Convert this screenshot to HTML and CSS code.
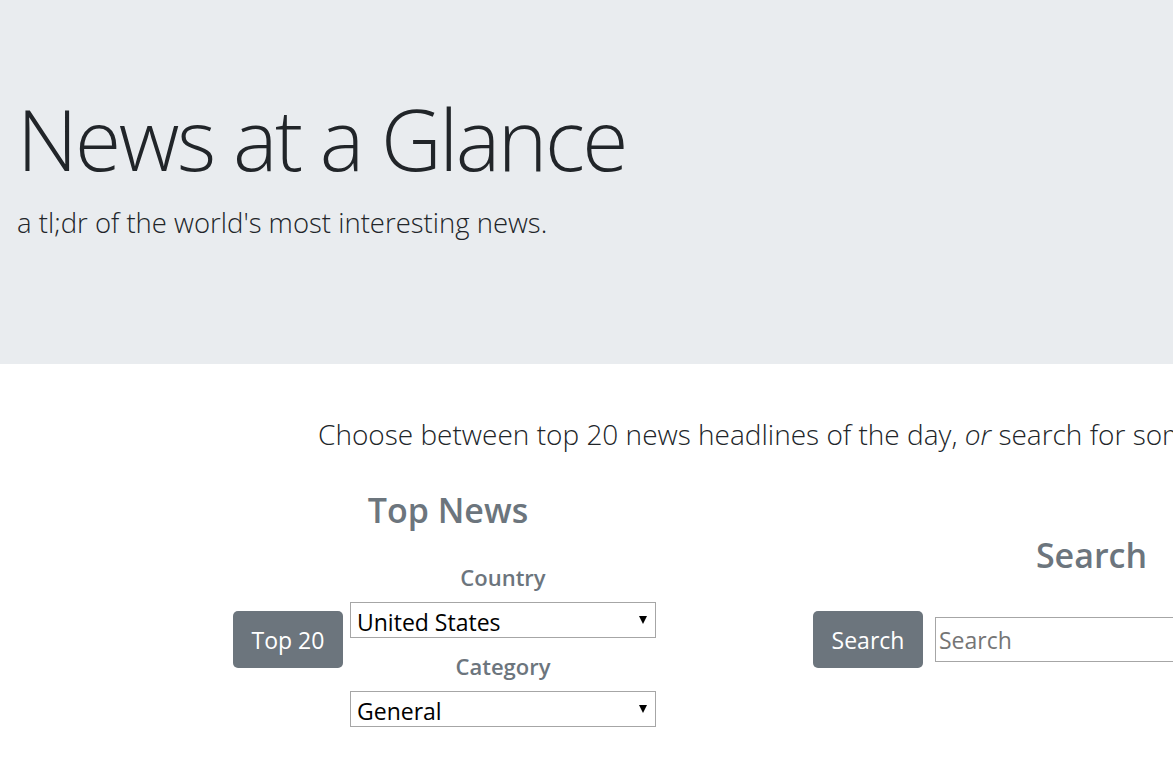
FILE: index.html
```html
<!DOCTYPE html>
<html lang="en">
<head>
<meta charset="utf-8">
<title>News at a Glance</title>
<link rel="stylesheet" href="styles.css">
</head>
<body>
<header class="jumbotron">
  <h1 class="title">News at a Glance</h1>
  <p class="lead">a tl;dr of the world's most interesting news.</p>
</header>
<main class="content">
  <p class="intro">Choose between top 20 news headlines of the day, <em>or</em> search for something specific.</p>
  <div class="panels">
    <section class="panel panel-top">
      <h2 class="panel-title">Top News</h2>
      <form class="panel-form">
        <button type="button" class="btn btn-top">Top 20</button>
        <div class="fields">
          <label class="field-label">Country</label>
          <div class="select-wrap">
            <select class="select"><option>United States</option></select>
          </div>
          <label class="field-label field-label-second">Category</label>
          <div class="select-wrap">
            <select class="select"><option>General</option></select>
          </div>
        </div>
      </form>
    </section>
    <section class="panel panel-search">
      <h2 class="panel-title">Search</h2>
      <form class="panel-form search-form">
        <button type="button" class="btn">Search</button>
        <input class="search-input" type="text" placeholder="Search">
      </form>
    </section>
  </div>
</main>
</body>
</html>
```

FILE: styles.css
```css
html, body {
  margin: 0;
  padding: 0;
  width: 1173px;
  height: 770px;
  overflow: hidden;
  background: #ffffff;
}

body {
  font-family: "Open Sans", "Noto Sans", sans-serif;
  color: #212529;
}

.jumbotron {
  background: #e9ecef;
  height: 364px;
  box-sizing: border-box;
  padding: 97px 0 0 17px;
}

.title {
  margin: 0;
  font-size: 84px;
  line-height: 1;
  font-weight: 300;
  letter-spacing: -2.5px;
  color: #212529;
  white-space: nowrap;
}

.lead {
  margin: 28px 0 0;
  font-size: 27.5px;
  line-height: 1;
  font-weight: 300;
  color: #212529;
  white-space: nowrap;
}

.content {
  padding-top: 56px;
}

.intro {
  margin: 0 0 44px;
  padding-left: 318px;
  font-size: 28px;
  line-height: 1;
  font-weight: 300;
  white-space: nowrap;
}

.intro em {
  font-style: italic;
}

.panels {
  display: flex;
  padding-left: 233px;
  width: 1500px;
}

.panel {
  display: flex;
  flex-direction: column;
}

.panel-top {
  width: 430px;
}

.panel-search {
  width: 557px;
  margin-left: 150px;
  padding-top: 46px;
}

.panel-title {
  margin: 0;
  text-align: center;
  font-size: 34px;
  line-height: 1;
  font-weight: 600;
  color: #6c757d;
}

.panel-top .panel-title {
  padding-top: 1px;
}

.panel-form {
  display: flex;
  align-items: flex-start;
  margin: 39px 0 0;
}

.btn {
  flex: none;
  width: 110px;
  height: 57px;
  border: none;
  border-radius: 5px;
  background: #6c757d;
  color: #ffffff;
  font-family: inherit;
  font-size: 23px;
  padding: 0;
}

.btn-top {
  margin-top: 45px;
}

.fields {
  display: flex;
  flex-direction: column;
  width: 306px;
  margin-left: 7px;
}

.field-label {
  display: block;
  text-align: center;
  font-size: 22px;
  line-height: 1;
  font-weight: 600;
  color: #6c757d;
  margin-bottom: 14px;
}

.field-label-second {
  margin-top: 17px;
}

.select-wrap {
  position: relative;
}

.select-wrap::after {
  content: "";
  position: absolute;
  right: 9px;
  top: 14px;
  border-left: 4.5px solid transparent;
  border-right: 4.5px solid transparent;
  border-top: 8px solid #000;
  pointer-events: none;
}

.select {
  display: block;
  width: 306px;
  height: 36px;
  box-sizing: border-box;
  appearance: none;
  -webkit-appearance: none;
  background: #ffffff;
  border: 1px solid #a6a6a6;
  border-radius: 0;
  padding: 3px 0 0 6px;
  font-family: inherit;
  font-size: 23px;
  color: #000000;
}

.search-form {
  align-items: center;
  margin-top: 39px;
}

.search-input {
  flex: none;
  width: 435px;
  height: 45px;
  box-sizing: border-box;
  margin-left: 12px;
  border: 1px solid #a6a6a6;
  border-radius: 0;
  padding: 0 3px;
  font-family: inherit;
  font-size: 23px;
  color: #000;
}

.search-input::placeholder {
  color: #757575;
}
```
